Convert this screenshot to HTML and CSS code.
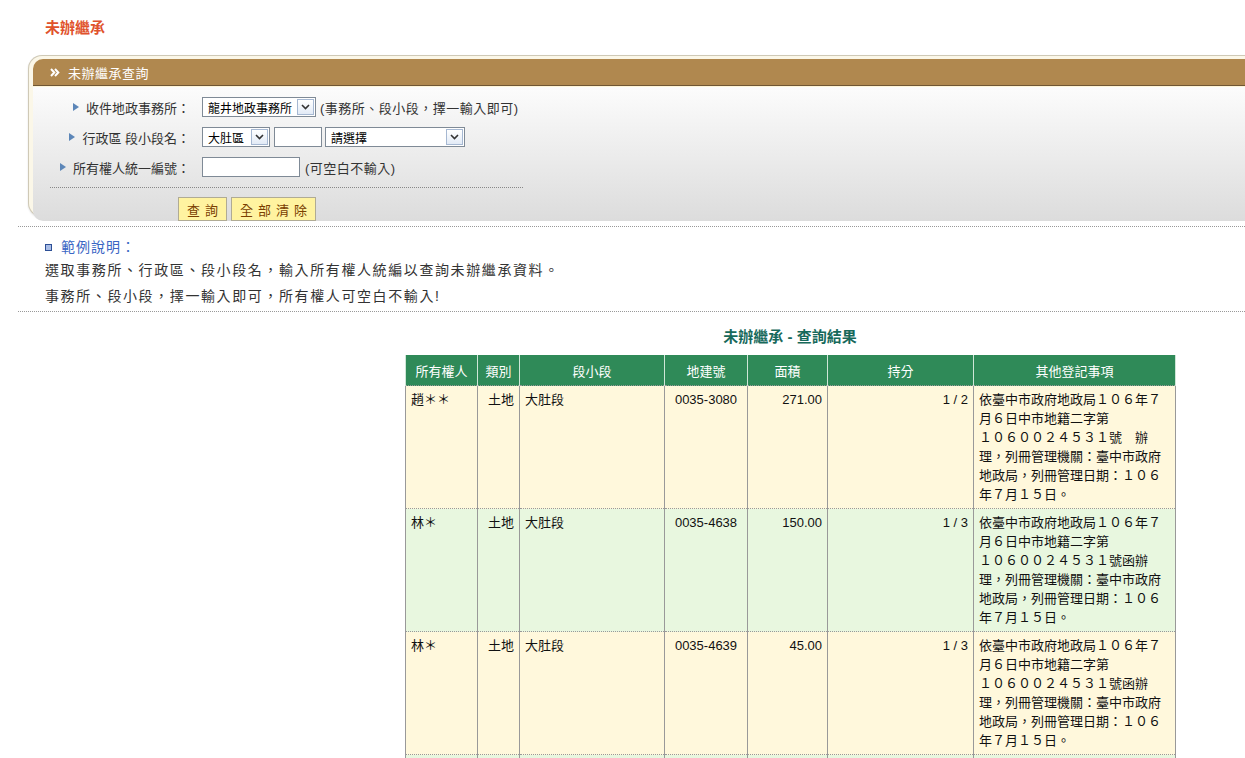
FILE: index.html
```html
<!DOCTYPE html>
<html lang="zh-Hant">
<head>
    <meta charset="UTF-8">
    <meta name="viewport" content="width=device-width, initial-scale=1.0">
    <title>未辦繼承查詢</title>
    <link rel="stylesheet" href="styles.css">
</head>
<body>
<div class="page">
    <h1 class="page-title">未辦繼承</h1>

    <!-- 查詢條件 -->
    <div class="panel">
        <div class="panel-head">
            <svg class="head-icon" width="10" height="9" viewBox="0 0 10 9"><path d="M1 1l3.3 3.5L1 8M5 1l3.3 3.5L5 8" fill="none" stroke="#fff" stroke-width="2"/></svg>
            未辦繼承查詢
        </div>
        <div class="panel-body">
            <div class="form-row">
                <label class="form-label"><svg class="arrow" width="6" height="8" viewBox="0 0 6 8"><path d="M0 0L6 4L0 8Z" fill="#5c86b8"/></svg>收件地政事務所：</label>
                <span class="select select-office"><span class="select-text">龍井地政事務所</span><span class="select-btn"><svg width="9" height="6" viewBox="0 0 9 6"><path d="M1 1l3.5 3.5L8 1" fill="none" stroke="#333" stroke-width="1.6"/></svg></span></span>
                <span class="hint">(事務所、段小段，擇一輸入即可)</span>
            </div>
            <div class="form-row">
                <label class="form-label"><svg class="arrow" width="6" height="8" viewBox="0 0 6 8"><path d="M0 0L6 4L0 8Z" fill="#5c86b8"/></svg>行政區 段小段名：</label>
                <span class="select select-district"><span class="select-text">大肚區</span><span class="select-btn"><svg width="9" height="6" viewBox="0 0 9 6"><path d="M1 1l3.5 3.5L8 1" fill="none" stroke="#333" stroke-width="1.6"/></svg></span></span>
                <input type="text" class="text-input input-section">
                <span class="select select-section"><span class="select-text">請選擇</span><span class="select-btn"><svg width="9" height="6" viewBox="0 0 9 6"><path d="M1 1l3.5 3.5L8 1" fill="none" stroke="#333" stroke-width="1.6"/></svg></span></span>
            </div>
            <div class="form-row">
                <label class="form-label"><svg class="arrow" width="6" height="8" viewBox="0 0 6 8"><path d="M0 0L6 4L0 8Z" fill="#5c86b8"/></svg>所有權人統一編號：</label>
                <input type="text" class="text-input input-owner">
                <span class="hint hint-owner">(可空白不輸入)</span>
            </div>
            <div class="form-rule"></div>
            <div class="form-actions">
                <button class="btn">查詢</button>
                <button class="btn">全部清除</button>
            </div>
        </div>
    </div>

    <div class="rule"></div>

    <div class="notes">
        <div class="notes-head"><span class="square"></span>範例說明：</div>
        <p>選取事務所、行政區、段小段名，輸入所有權人統編以查詢未辦繼承資料。</p>
        <p>事務所、段小段，擇一輸入即可，所有權人可空白不輸入!</p>
    </div>

    <div class="rule rule-tight"></div>

    <!-- 查詢結果 -->
    <div class="results">
        <h2 class="results-title">未辦繼承 - 查詢結果</h2>
        <table class="result-table">
            <colgroup>
                <col class="col-owner">
                <col class="col-kind">
                <col class="col-section">
                <col class="col-no">
                <col class="col-area">
                <col class="col-share">
                <col class="col-note">
            </colgroup>
            <thead>
                <tr>
                    <th>所有權人</th>
                    <th>類別</th>
                    <th>段小段</th>
                    <th>地建號</th>
                    <th>面積</th>
                    <th>持分</th>
                    <th>其他登記事項</th>
                </tr>
            </thead>
            <tbody>
                <tr class="row-odd">
                    <td>趙＊＊</td>
                    <td class="c-right">土地</td>
                    <td>大肚段</td>
                    <td class="c-center">0035-3080</td>
                    <td class="c-right">271.00</td>
                    <td class="c-right">1 / 2</td>
                    <td>依臺中市政府地政局１０６年７月６日中市地籍二字第<span class="nobr">１０６００２４５３１號</span>　辦理，列冊管理機關：臺中市政府地政局，列冊管理日期：１０６年７月１５日。</td>
                </tr>
                <tr class="row-even">
                    <td>林＊</td>
                    <td class="c-right">土地</td>
                    <td>大肚段</td>
                    <td class="c-center">0035-4638</td>
                    <td class="c-right">150.00</td>
                    <td class="c-right">1 / 3</td>
                    <td>依臺中市政府地政局１０６年７月６日中市地籍二字第<span class="nobr">１０６００２４５３１號</span>函辦理，列冊管理機關：臺中市政府地政局，列冊管理日期：１０６年７月１５日。</td>
                </tr>
                <tr class="row-odd">
                    <td>林＊</td>
                    <td class="c-right">土地</td>
                    <td>大肚段</td>
                    <td class="c-center">0035-4639</td>
                    <td class="c-right">45.00</td>
                    <td class="c-right">1 / 3</td>
                    <td>依臺中市政府地政局１０６年７月６日中市地籍二字第<span class="nobr">１０６００２４５３１號</span>函辦理，列冊管理機關：臺中市政府地政局，列冊管理日期：１０６年７月１５日。</td>
                </tr>
                <tr class="row-even row-blank">
                    <td></td>
                    <td></td>
                    <td></td>
                    <td></td>
                    <td></td>
                    <td></td>
                    <td></td>
                </tr>
            </tbody>
        </table>
    </div>
</div>
</body>
</html>
```

FILE: styles.css
```css
body {
    margin: 0;
    font-family: "Liberation Sans", "Noto Sans CJK TC", sans-serif;
    font-size: 13px;
    color: #333;
    background-color: #fff;
}

.page {
    overflow: hidden;
    padding: 18px 0 40px 18px;
}

.page-title {
    margin: 0 0 0 27px;
    font-size: 15px;
    line-height: 20px;
    font-weight: bold;
    color: #e0522c;
}

/* 查詢區塊外框 */
.panel {
    margin: 17px -40px 0 10px;
    padding: 3px 0 3px 4px;
    background-color: #fbf7e8;
    border: 1px solid #cfc9b6;
    border-right: none;
    border-radius: 14px 0 0 14px;
    box-shadow: 0 1px 2px rgba(0, 0, 0, 0.12);
}

.panel-head {
    display: flex;
    align-items: center;
    height: 26px;
    padding-left: 17px;
    background-color: #b0884f;
    border-bottom: 1px solid #6f5634;
    border-radius: 10px 0 0 0;
    color: #fff;
    letter-spacing: 0.5px;
}

.head-icon {
    margin-right: 8px;
}

.panel-body {
    padding-top: 10px;
    background: linear-gradient(#fcfcfc, #dcdcdc);
    border-top: 1px solid #fff5d8;
    border-radius: 0 0 0 10px;
}

.form-row {
    display: flex;
    align-items: center;
    height: 20px;
    margin-bottom: 10px;
}

.form-row:last-of-type {
    margin-bottom: 0;
}

.form-label {
    display: flex;
    align-items: center;
    justify-content: flex-end;
    width: 157px;
    margin-right: 12px;
    white-space: nowrap;
    color: #333;
}

.arrow {
    margin-right: 7px;
}

.select {
    display: inline-flex;
    align-items: center;
    height: 20px;
    box-sizing: border-box;
    padding-left: 5px;
    background-color: #fff;
    border: 1px solid #7f8a96;
    color: #000;
    font-size: 12px;
}

.select-text {
    flex: 1;
    white-space: nowrap;
    overflow: hidden;
}

.select-btn {
    display: flex;
    align-items: center;
    justify-content: center;
    flex-shrink: 0;
    width: 17px;
    height: 16px;
    margin-right: 1px;
    box-sizing: border-box;
    background: linear-gradient(#fff, #e2eaf6);
    border: 1px solid #a6b8d2;
}

.select-office {
    width: 114px;
}

.select-district {
    width: 68px;
}

.select-section {
    width: 140px;
    margin-left: 3px;
}

.text-input {
    height: 20px;
    box-sizing: border-box;
    margin: 0;
    padding: 0 3px;
    background-color: #fff;
    border: 1px solid #7f8a96;
}

.input-section {
    width: 48px;
    margin-left: 4px;
}

.input-owner {
    width: 98px;
}

.hint {
    margin-left: 4px;
    letter-spacing: 0.5px;
    white-space: nowrap;
}

.hint-owner {
    margin-left: 5px;
}

.form-rule {
    width: 473px;
    margin: 9px 0 0 17px;
    border-top: 1px dotted #888;
}

.form-actions {
    position: relative;
    display: flex;
    gap: 4px;
    margin: 9px 0 -8px 145px;
}

.btn {
    height: 24px;
    padding: 0 3px 0 8px;
    background-color: #fff3a0;
    border: 1px solid #b0ab94;
    color: #7a3e00;
    font-family: inherit;
    font-size: 13px;
    letter-spacing: 5px;
    cursor: pointer;
}

.rule {
    margin-top: 9px;
    border-top: 1px dotted #999;
}

.rule-tight {
    margin-top: 2px;
}

/* 範例說明 */
.notes {
    padding: 10px 0 0 27px;
}

.notes-head {
    display: flex;
    align-items: center;
    line-height: 20px;
    font-size: 14px;
    letter-spacing: 1px;
    color: #3a66c4;
}

.square {
    width: 5px;
    height: 5px;
    margin-right: 9px;
    background-color: #a9bde6;
    border: 1px solid #2d4f96;
}

.notes p {
    margin: 0;
    line-height: 26px;
    font-size: 14px;
    letter-spacing: 1.6px;
    color: #333;
}

/* 查詢結果表格 */
.results {
    width: 770px;
    margin-left: 387px;
}

.results-title {
    margin: 15px 0 8px;
    text-align: center;
    font-size: 15px;
    line-height: 20px;
    font-weight: bold;
    color: #17695b;
}

.result-table {
    width: 770px;
    table-layout: fixed;
    border-collapse: collapse;
    font-size: 13px;
    color: #111;
}

.col-owner { width: 72px; }
.col-kind { width: 42px; }
.col-section { width: 145px; }
.col-no { width: 83px; }
.col-area { width: 80px; }
.col-share { width: 146px; }
.col-note { width: 202px; }

.result-table th {
    height: 30px;
    padding: 0;
    background-color: #2f8a58;
    border-left: 1px solid #cfe6d7;
    border-right: 1px solid #cfe6d7;
    color: #fff;
    font-weight: normal;
}

.result-table td {
    padding: 4px 5px;
    line-height: 19px;
    vertical-align: top;
    border-left: 1px solid #999;
    border-right: 1px solid #999;
    border-top: 1px dotted #999;
    border-bottom: 1px dotted #999;
}

.row-odd td {
    background-color: #fff8dc;
}

.row-even td {
    background-color: #e8f7df;
}

.row-blank td {
    height: 60px;
}

.c-right {
    text-align: right;
}

.c-center {
    text-align: center;
}

.nobr {
    white-space: nowrap;
}
```
